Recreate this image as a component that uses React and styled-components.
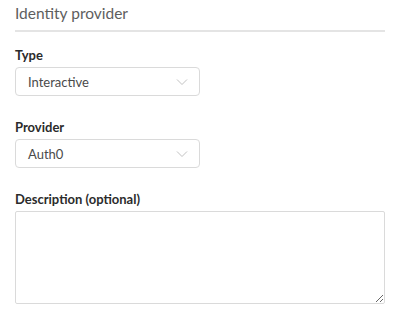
import styled, { createGlobalStyle } from "styled-components";

const GlobalStyle = createGlobalStyle`
  body {
    margin: 0;
    background: #fff;
    font-family: Lato, "Noto Sans", sans-serif;
  }
`;

const Chevron = () => (
  <svg width="12" height="8" viewBox="0 0 12 8" fill="none">
    <path d="M1 1.5L6 6.5L11 1.5" stroke="#c2c2c2" strokeWidth="1" />
  </svg>
);

const App = () => {
  return (
    <>
      <GlobalStyle />
      <FormStyled>
        <h2 className="title">Identity provider</h2>

        <Field>
          <Label>Type</Label>
          <Select>
            <span>Interactive</span>
            <Chevron />
          </Select>
        </Field>

        <Field>
          <Label>Provider</Label>
          <Select>
            <span>Auth0</span>
            <Chevron />
          </Select>
        </Field>

        <Field>
          <Label>Description (optional)</Label>
          <TextArea />
        </Field>
      </FormStyled>
    </>
  );
};

const FormStyled = styled.div`
  padding: 4px 14px 0 15px;
  .title {
    margin: 0;
    font-size: 15.5px;
    font-weight: 400;
    color: #5e5e5e;
    line-height: 19px;
    padding-bottom: 7px;
    border-bottom: 2px solid #e4e4e4;
  }
`;

const Field = styled.div`
  display: flex;
  flex-direction: column;
  margin-top: 15px;
  & + & {
    margin-top: 23px;
  }
`;

const Label = styled.label`
  font-size: 13px;
  font-weight: 700;
  color: #2b2b2b;
  line-height: 16px;
  margin-bottom: 4px;
`;

const Select = styled.div`
  width: 185px;
  height: 29px;
  box-sizing: border-box;
  border: 1px solid #dadada;
  border-radius: 4px;
  display: flex;
  align-items: center;
  justify-content: space-between;
  padding: 0 11px 0 12px;
  span {
    font-size: 13px;
    color: #4a4a4a;
  }
`;

const TextArea = styled.textarea`
  width: 370px;
  height: 93px;
  box-sizing: border-box;
  border: 1px solid #dadada;
  border-radius: 2px;
  resize: vertical;
  font-family: inherit;
  outline: none;
`;

export default App;
